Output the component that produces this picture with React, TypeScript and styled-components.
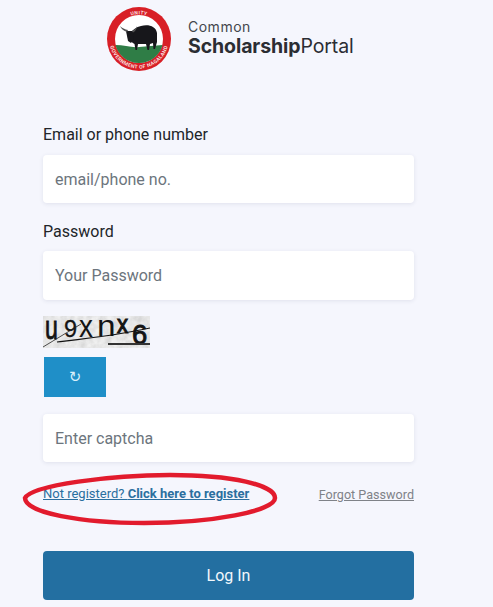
import React, { FC } from "react";
import styled, { createGlobalStyle } from "styled-components";

const GlobalStyle = createGlobalStyle`
  html, body {
    margin: 0;
    padding: 0;
    background: #f5f6fd;
    font-family: Roboto, "Liberation Sans", sans-serif;
    color: #212529;
  }
  * { box-sizing: border-box; }
`;

const Emblem: FC = () => (
  <svg width="66" height="66" viewBox="0 0 66 66">
    <defs>
      <path id="arcTop" d="M11 21 A25.5 25.5 0 0 1 55 21" />
      <path id="arcBottom" d="M3.5 37 A29.8 29.8 0 0 0 62.5 37" />
    </defs>
    <circle cx="33" cy="33" r="32" fill="#d81f26" />
    <circle cx="33" cy="33" r="24" fill="#ffffff" />
    <path d="M9.5 39 C18 39 26 42 33 41 C41 40 49 40 56.5 39 C54 49 45 57 33 57 C21 57 12 49 9.5 39Z" fill="#2f7d46" />
    {/* yak */}
    <path
      d="M24 27 C27 24 30 21 35 20 C42 18 50 20 51 27 L51 36 L49 43 L47.5 43 L47 37 L44 38 L43 44 L41.5 44 L40 38 L32 38 L31 44 L29.5 44 L28.5 38 C26 37 25 35 24.5 33 Z"
      fill="#17171b"
    />
    <path d="M20 25 L27 25 L28 33 L25 37 L22 35 L21 30 Z" fill="#17171b" />
    <path d="M21 26 C18 25 15 23 14 20 C16 22 19 23.5 22 24 Z" fill="#555" />
    <path d="M26 25 C28 24 30 23 31 20 C31 23 29 25.5 27 26.5 Z" fill="#555" />
    <text fontFamily="Roboto, sans-serif" fontSize="5" fontWeight="700" fill="#f7dede" letterSpacing="0.3">
      <textPath href="#arcTop" startOffset="50%" textAnchor="middle">UNITY</textPath>
    </text>
    <text fontFamily="Roboto, sans-serif" fontSize="5.2" fontWeight="700" fill="#f7dede" letterSpacing="0.3">
      <textPath href="#arcBottom" startOffset="50%" textAnchor="middle">GOVERNMENT OF NAGALAND</textPath>
    </text>
  </svg>
);

const captchaLetters = [
  { ch: "u", x: 2, y: 23, size: 33, sx: 0.7, weight: 0.9 },
  { ch: "9", x: 21, y: 21, size: 24, sx: 0.98, weight: 0.3 },
  { ch: "x", x: 36, y: 21, size: 31, sx: 0.9, weight: 0 },
  { ch: "n", x: 54, y: 20, size: 29, sx: 1.15, weight: 0 },
  { ch: "x", x: 74, y: 17, size: 26, sx: 0.85, weight: 1.1 },
  { ch: "6", x: 89, y: 28, size: 28, sx: 0.98, weight: 0.9 },
];

const CaptchaArt: FC = () => (
  <svg width="107" height="32" viewBox="0 0 107 32" overflow="visible">
    <defs>
      <filter id="noise" x="0" y="0" width="100%" height="100%">
        <feTurbulence type="fractalNoise" baseFrequency="0.16" numOctaves="3" seed="4" />
        <feColorMatrix values="0 0 0 0 0.68  0 0 0 0 0.68  0 0 0 0 0.68  1.1 1.1 0 0 -0.7" />
      </filter>
    </defs>
    <rect width="107" height="32" fill="#f0f0f0" />
    <rect width="107" height="32" filter="url(#noise)" />
    <g fontFamily="'Liberation Sans', sans-serif" fill="#141414" stroke="#141414">
      {captchaLetters.map((l, i) => (
        <text
          key={i}
          transform={`translate(${l.x} ${l.y}) scale(${l.sx} 1)`}
          fontSize={l.size}
          strokeWidth={l.weight}
        >
          {l.ch}
        </text>
      ))}
    </g>
    <path d="M0 31 L38 8" stroke="#222" strokeWidth="0.8" fill="none" />
    <path d="M14 26 C40 23 70 20 107 12" stroke="#111" strokeWidth="1.1" fill="none" />
    <path d="M65 28 H107" stroke="#333" strokeWidth="2" fill="none" />
  </svg>
);

const Page = styled.div`
  position: relative;
  width: 493px;
  height: 607px;
  overflow: hidden;
  padding: 7px 79px 0 43px;
`;

const Brand = styled.header`
  display: flex;
  align-items: center;
  gap: 16px;
  height: 64px;
  margin: 0 0 52px 63px;
`;

const BrandText = styled.div`
  display: flex;
  flex-direction: column;
  font-family: Inter, "Open Sans", sans-serif;
  color: #2b2d33;
  margin-top: -3px;
`;

const BrandTop = styled.span`
  font-size: 14px;
  line-height: 17px;
  letter-spacing: 0.5px;
  color: #44464c;
`;

const BrandBottom = styled.span`
  font-size: 19.5px;
  line-height: 23px;
  letter-spacing: -0.1px;

  b {
    font-weight: 700;
  }
`;

const Label = styled.label<{ $gap?: number }>`
  display: block;
  font-size: 16px;
  line-height: 24px;
  margin-bottom: ${(p) => p.$gap ?? 8}px;
`;

const Field = styled.div<{ $gap?: number }>`
  margin-bottom: ${(p) => p.$gap ?? 16}px;
`;

const TextInput = styled.input<{ $height?: number }>`
  display: block;
  width: 100%;
  height: ${(p) => p.$height ?? 48}px;
  padding: 0 12px;
  border: 0;
  border-radius: 4px;
  background: #fff;
  box-shadow: 0 1px 4px rgba(40, 50, 90, 0.1);
  font: 400 16px Roboto, sans-serif;
  outline: none;

  &::placeholder {
    color: #6c757d;
    opacity: 1;
  }
`;

const CaptchaImage = styled.div`
  height: 32px;
  margin-bottom: 9px;
  svg { display: block; }
`;

const RefreshButton = styled.button`
  display: block;
  width: 62px;
  height: 40px;
  margin: 0 0 17px 1px;
  border: 0;
  background: #1f8fc8;
  color: #d7f0fb;
  font: 400 15px "DejaVu Sans", sans-serif;
`;

const LinkRow = styled.div`
  display: flex;
  justify-content: space-between;
  align-items: center;
  height: 22px;
  margin: 21px 0 46px;
  font-size: 13px;
`;

const RegisterLink = styled.a`
  color: #2b6f9f;
  text-decoration: underline;
  margin-top: -2px;
`;

const ForgotLink = styled.a`
  color: #7f8288;
  font-size: 12.6px;
  text-decoration: underline;
`;

const LoginButton = styled.button`
  display: block;
  width: 100%;
  height: 49px;
  border: 0;
  border-radius: 4px;
  background: #236fa1;
  color: #f2f8fc;
  font: 400 16px Roboto, sans-serif;
`;

const Annotation = styled.svg`
  position: absolute;
  left: 22px;
  top: 471px;
  pointer-events: none;
`;

export default function App() {
  return (
    <>
      <GlobalStyle />
      <Page>
        <Brand>
          <Emblem />
          <BrandText>
            <BrandTop>Common</BrandTop>
            <BrandBottom>
              <b>Scholarship</b>Portal
            </BrandBottom>
          </BrandText>
        </Brand>
        <Field $gap={17}>
          <Label>Email or phone number</Label>
          <TextInput placeholder="email/phone no." />
        </Field>
        <Field>
          <Label $gap={7}>Password</Label>
          <TextInput $height={49} placeholder="Your Password" type="password" />
        </Field>
        <CaptchaImage>
          <CaptchaArt />
        </CaptchaImage>
        <RefreshButton>↻</RefreshButton>
        <TextInput placeholder="Enter captcha" />
        <LinkRow>
          <RegisterLink>
            Not registerd? <b>Click here to register</b>
          </RegisterLink>
          <ForgotLink>Forgot Password</ForgotLink>
        </LinkRow>
        <LoginButton>Log In</LoginButton>
        <Annotation width="258" height="56" viewBox="0 0 258 56">
          <path
            d="M3 27 C10 14 90 4 148 4 C210 4 253 14 253 27 C253 40 190 52 122 52 C60 52 3 42 3 27Z"
            fill="none"
            stroke="#e21b2d"
            strokeWidth="4.5"
          />
        </Annotation>
      </Page>
    </>
  );
}
